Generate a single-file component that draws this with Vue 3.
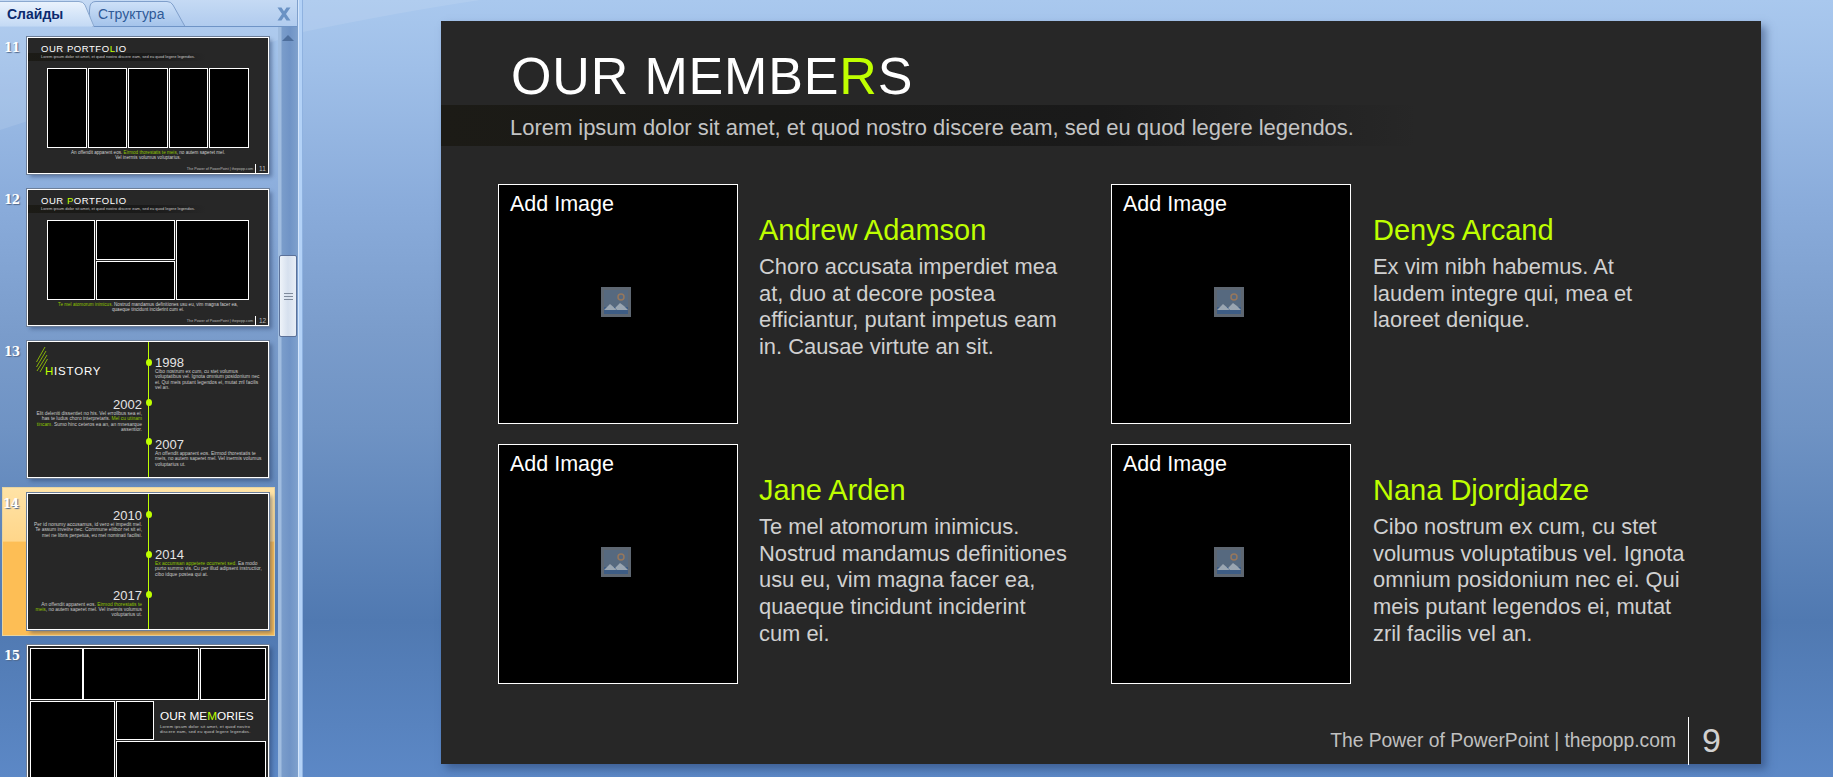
<script setup>
const members = [
  { name: 'Andrew Adamson', lines: ['Choro accusata imperdiet mea', 'at, duo at decore postea', 'efficiantur, putant impetus eam', 'in. Causae virtute an sit.'] },
  { name: 'Denys Arcand', lines: ['Ex vim nibh habemus. At', 'laudem integre qui, mea et', 'laoreet denique.'] },
  { name: 'Jane Arden', lines: ['Te mel atomorum inimicus.', 'Nostrud mandamus definitiones', 'usu eu, vim magna facer ea,', 'quaeque tincidunt inciderint', 'cum ei.'] },
  { name: 'Nana Djordjadze', lines: ['Cibo nostrum ex cum, cu stet', 'volumus voluptatibus vel. Ignota', 'omnium posidonium nec ei. Qui', 'meis putant legendos ei, mutat', 'zril facilis vel an.'] }
]
</script>

<template>
  <div class="app">
    <svg class="swoosh" width="500" height="140" viewBox="0 0 500 140"><path d="M0 130L303 32Q400 12 480 0H0z" fill="#fff" fill-opacity=".1"/></svg>
    <aside class="panel">
      <div class="tabs">
        <svg class="tab-shapes" width="297" height="27" viewBox="0 0 297 27">
          <defs>
            <linearGradient id="tabA" x1="0" y1="0" x2="0" y2="1"><stop offset="0" stop-color="#eaf3fd"/><stop offset="1" stop-color="#c3d9f4"/></linearGradient>
            <linearGradient id="tabB" x1="0" y1="0" x2="0" y2="1"><stop offset="0" stop-color="#cee1f8"/><stop offset="1" stop-color="#a4c3ea"/></linearGradient>
          </defs>
          <path d="M92.500 26.500Q88 16 90 6Q91 1.500 96 1.500H167Q171 1.500 173 5L185 26.500z" fill="url(#tabB)" stroke="#7f9fcb"/>
          <path d="M-1 26.500V1.500H79Q83 1.500 85 5L94 26.500" fill="url(#tabA)" stroke="#8ba9d0"/>
          <path d="M94 26.500H297" stroke="#6f94c6" fill="none"/>
        </svg>
        <div class="tab active">Слайды</div>
        <div class="tab">Структура</div>
        <svg class="close" width="14" height="14" viewBox="0 0 14 14"><path d="M.5 .5h4l2.500 3.800L9.500 .5h4L9 7l4.500 6.500h-4L7 9.700 4.500 13.500h-4L5 7z" fill="#6a92c4"/></svg>
      </div>
      <div class="panel-body">
        <div class="list">
          <!-- 11 -->
          <div class="row">
            <span class="num">11</span>
            <div class="thumb">
              <div class="t-title">OUR PORTFO<b>L</b>IO</div>
              <div class="t-band">Lorem ipsum dolor sit amet, et quod nostro discere eam, sed eu quod legere legendos.</div>
              <div class="t-boxes five"><i></i><i></i><i></i><i></i><i></i></div>
              <div class="t-cap">An offendit apparent eos. <b>Eirmod thorestatis te meis</b>, no autem saperet mel.<br>Vel inermis volumus voluptarius.</div>
              <div class="t-foot"><span>The Power of PowerPoint | thepopp.com</span><em>11</em></div>
            </div>
          </div>
          <!-- 12 -->
          <div class="row">
            <span class="num">12</span>
            <div class="thumb">
              <div class="t-title">OUR <b>P</b>ORTFOLIO</div>
              <div class="t-band">Lorem ipsum dolor sit amet, et quod nostro discere eam, sed eu quod legere legendos.</div>
              <div class="t-boxes mixed"><i></i><div class="stack"><i></i><i></i></div><i></i></div>
              <div class="t-cap"><b>Te mel atomorum inimicus.</b> Nostrud mandamus definitiones usu eu, vim magna facer ea,<br>quaeque tincidunt inciderint cum ei.</div>
              <div class="t-foot"><span>The Power of PowerPoint | thepopp.com</span><em>12</em></div>
            </div>
          </div>
          <!-- 13 -->
          <div class="row">
            <span class="num">13</span>
            <div class="thumb timeline">
              <div class="side left">
                <div class="hist">
                  <svg class="hatch" width="12" height="26" viewBox="0 0 12 26"><path d="M0.500 15L9 0M0.500 20L10 4M1 24L11 8M4 25L11.500 12" stroke="#9fd600" stroke-width=".8" fill="none"/></svg>
                  <span><b>H</b>ISTORY</span>
                </div>
                <div class="item i2002"><div class="yr">2002</div><p>Elit deleniti dissentiet no his. Vel errollbus sea ei,<br>has te ludus choro interpretaris. <b>Mel cu utinam</b><br><b>tincam.</b> Sumo hinc ceteros ea an, an mnesarque<br>assentior.</p></div>
              </div>
              <div class="side right">
                <div class="item i1998"><div class="yr">1998</div><p>Cibo nostrum ex cum, cu stet volumus<br>voluptatibus vel. Ignota omnium posidonium nec<br>ei. Qui meis putant legendos ei, mutat zril facilis<br>vel an.</p></div>
                <div class="item i2007"><div class="yr">2007</div><p>An offendit apparent eos. Eirmod thorestatis te<br>meis, no autem saperet mel. Vel inermis volumus<br>voluptarius ut.</p></div>
              </div>
              <i class="dot d1"></i><i class="dot d2"></i><i class="dot d3"></i>
            </div>
          </div>
          <!-- 14 -->
          <div class="row selected">
            <span class="num">14</span>
            <div class="thumb timeline">
              <div class="side left">
                <div class="item i2010"><div class="yr">2010</div><p>Per id nonumy accusamus, id vero ei impedit mel.<br>Te assum inveiire nec. Commune elitbor ret sit ei,<br>mei ne libris perpetua, eu mel nominati facilisi.</p></div>
                <div class="item i2017"><div class="yr">2017</div><p>An offendit apparent eos. <b>Eirmod thorestatis te</b><br><b>meis</b>, no autem saperet mel. Vel inermis volumus<br>voluptarius ut.</p></div>
              </div>
              <div class="side right">
                <div class="item i2014"><div class="yr">2014</div><p><b>Ex accumsan appetere ocurreret sed.</b> Ea modo<br>purto summo vis. Cu per illud adipsent instructior,<br>cibo idque postea qui at.</p></div>
              </div>
              <i class="dot d4"></i><i class="dot d5"></i><i class="dot d6"></i>
            </div>
          </div>
          <!-- 15 -->
          <div class="row">
            <span class="num">15</span>
            <div class="thumb mem">
              <i class="a1"></i><i class="a2"></i><i class="a3"></i>
              <i class="b1"></i><i class="b2"></i><i class="b3"></i>
              <div class="mem-text">
                <div class="mem-title">OUR ME<b>M</b>ORIES</div>
                <p>Lorem ipsum dolor sit amet, et quod nostro<br>discere eam, sed eu quod legere legendos.</p>
              </div>
            </div>
          </div>
        </div>
        <div class="scroll">
          <div class="arrow"></div>
          <div class="knob"><span></span></div>
        </div>
      </div>
    </aside>
    <div class="split"></div>
    <main class="stage">
      <section class="slide">
        <h1 class="title">OUR MEMBE<span>R</span>S</h1>
        <div class="band">Lorem ipsum dolor sit amet, et quod nostro discere eam, sed eu quod legere legendos.</div>
        <div class="grid">
          <article v-for="m in members" :key="m.name" class="card">
            <div class="pic">
              <span>Add Image</span>
              <svg class="ph" width="30" height="30" viewBox="0 0 30 30">
                <rect width="30" height="30" fill="#5e6772"/>
                <rect x="3" y="3" width="24" height="24" fill="#56697f"/>
                <rect x="3" y="20" width="24" height="7" fill="#3d5c84"/>
                <circle cx="20" cy="10" r="3" fill="none" stroke="#96775c" stroke-width="1.500"/>
                <path d="M3 23l6-6 3.500 3 3 3H3zM14 21l5-5 4 3 4 4H16z" fill="#9aa6b2"/>
              </svg>
            </div>
            <div class="info">
              <h2>{{ m.name }}</h2>
              <p v-for="l in m.lines" :key="l">{{ l }}</p>
            </div>
          </article>
        </div>
        <footer class="foot">
          <span>The Power of PowerPoint | thepopp.com</span>
          <em>9</em>
        </footer>
      </section>
    </main>
  </div>
</template>

<style>
html, body { margin: 0; padding: 0; overflow: hidden; }
</style>

<style scoped>
* { box-sizing: border-box; }
.app {
  width: 1833px; height: 777px; display: flex; overflow: hidden; position: relative;
  font-family: "Liberation Sans", Arial, sans-serif;
  background: linear-gradient(180deg, #a9c8ee 0%, #9fbfe8 9%, #8aacdb 26%, #7a9ccb 43%, #6f93c4 55%, #5079b1 80%, #5c88c6 100%);
}
.swoosh { position: absolute; left: 0; top: 0; }
.panel { width: 298px; flex: none; display: flex; flex-direction: column; height: 777px; position: relative; }
.tabs {
  height: 27px; flex: none; display: flex; align-items: center; position: relative;
  background: linear-gradient(180deg, #c5daf4, #b0cbee);
  border-right: 1px solid #7fa0cc;
}
.tab-shapes { position: absolute; left: 0; top: 0; }
.tab { position: relative; font-size: 14px; line-height: 26px; color: #2f5a97; padding-left: 7px; width: 90px; height: 26px; white-space: nowrap; }
.tab:not(.active) { padding-left: 8px; }
.tab.active { color: #0b2a6e; font-weight: 700; }
.close { position: absolute; right: 6px; top: 7px; }
.panel-body { flex: 1; display: flex; min-height: 0; }
.list { flex: 1; min-width: 0; padding: 10px 0 0 2px; display: flex; flex-direction: column; gap: 15px; overflow: hidden; }
.row { display: flex; flex: none; width: 273px; }
.num {
  width: 25px; flex: none; font: 700 12px "DejaVu Serif", serif; color: #fff; padding: 4px 0 0 2px; letter-spacing: -.5px;
  text-shadow: 1px 1px 1px #50698d;
}
.row.selected {
  margin: -6px 0 -6px; padding: 5px 0; height: 149px;
  background: linear-gradient(180deg, #ffe3a6 0%, #ffd68a 36%, #fdbe55 37%, #fdbe55 100%);
  border: 1px solid #e8d49f;
}
.row.selected .num { width: 24px; padding-left: 0; }
.thumb {
  width: 242px; height: 137px; flex: none; position: relative; overflow: hidden;
  background: #272727; border: 1px solid #fff; outline: 1px solid #6d7f99;
  box-shadow: 3px 3px 4px rgba(30, 50, 90, .45);
  color: #cfcfcf; display: flex; flex-direction: column;
}
.thumb b { color: #8fc400; font-weight: 400; }
.t-title { font-size: 9.500px; letter-spacing: .55px; color: #fff; padding: 5px 0 0 13px; height: 15px; line-height: 11px; white-space: nowrap; }
.t-title b { color: #bfff00; }
.t-band {
  height: 8px; line-height: 8px; font-size: 4px; padding-left: 13px; color: #c8c8c8; white-space: nowrap;
  background: linear-gradient(90deg, #1c1b16 0%, #191917 25%, #1a1a1a 50%, rgba(27,27,27,0) 74%);
}
.t-boxes { height: 80px; margin: 7px 19px 0 19px; display: flex; gap: 1px; flex: none; }
.t-boxes i { background: #000; border: 1px solid #fff; display: block; }
.five i { flex: 1; }
.mixed > i:first-child { width: 48px; }
.mixed > i:last-child { width: 73px; }
.stack { width: 80px; display: flex; flex-direction: column; gap: 1px; }
.stack i { flex: 1; }
.t-cap { font-size: 4.600px; line-height: 5.200px; text-align: center; margin: 2px 0 0; height: 11px; color: #d0d0d0; white-space: nowrap; }
.t-foot { display: flex; justify-content: flex-end; align-items: center; font-size: 3.700px; color: #bbb; margin-top: auto; height: 9px; }
.t-foot em { font-style: normal; font-size: 6.500px; border-left: 1px solid #fff; margin-left: 2px; width: 13px; padding-left: 3px; height: 9px; line-height: 9px; }
.timeline { flex-direction: row; }
.timeline::before { content: ''; position: absolute; left: 120px; top: 0; bottom: 0; width: 1px; background: #bfff00; }
.side { height: 100%; width: 120px; flex: none; display: flex; flex-direction: column; }
.side.left { text-align: right; align-items: flex-end; padding-right: 6px; }
.side.right { margin-left: 7px; width: 112px; }
.item { white-space: nowrap; }
.yr { font-size: 13px; line-height: 13px; color: #e4e4e4; }
.item p { margin: 0; font-size: 4.900px; line-height: 5.300px; color: #c9c9c9; }
.hist { height: 34px; position: relative; width: 100%; flex: none; text-align: left; }
.hist span { position: absolute; left: 17px; top: 23px; font-size: 11.500px; letter-spacing: .8px; color: #fff; line-height: 12px; }
.hist b { color: #bfff00; }
.hatch { position: absolute; left: 8px; top: 5px; }
.i2002 { margin-top: 22px; }
.i1998 { margin-top: 14px; }
.i2007 { margin-top: 48px; }
.i2010 { margin-top: 15px; }
.i2017 { margin-top: 51px; }
.i2014 { margin-top: 54px; }
.dot { position: absolute; width: 6px; height: 7px; border-radius: 50%; background: #bfff00; left: 117.500px; }
.d1 { top: 17px; } .d2 { top: 57px; } .d3 { top: 96px; }
.d4 { top: 17px; } .d5 { top: 57px; } .d6 { top: 97px; }
.mem {
  display: grid; padding: 2px 1px 0 2px; gap: 1px;
  grid-template-columns: 85px 1px 38px 1px 44px 1px 66px;
  grid-template-rows: 52px 39px 60px;
  column-gap: 0; height: 137px;
}
.mem i { background: #000; border: 1px solid #fff; display: block; }
.a1 { grid-area: 1 / 1 / 2 / 2; width: 53px; }
.a2 { grid-area: 1 / 1 / 2 / 6; margin-left: 53px; }
.a3 { grid-area: 1 / 6 / 2 / 8; margin-left: 1px; }
.b1 { grid-area: 2 / 1 / 4 / 2; }
.b2 { grid-area: 2 / 3 / 3 / 4; }
.b3 { grid-area: 3 / 3 / 4 / 8; }
.mem-text { grid-area: 2 / 5 / 3 / 8; padding: 9px 0 0 5px; white-space: nowrap; }
.mem-title { font-size: 11.800px; line-height: 13px; color: #fff; }
.mem-title b { color: #bfff00; }
.mem-text p { margin: 1px 0 0; font-size: 4.300px; line-height: 5px; letter-spacing: .2px; color: #c9c9c9; }
.scroll {
  width: 20px; flex: none; background: linear-gradient(90deg, #a0bde0 0, #a0bde0 3px, #7a9dcb 4px, #7094c6 60%, #7fa1cd);
  position: relative; height: 750px;
}
.arrow { margin: 8px 0 0 4px; width: 0; height: 0; border: 6px solid transparent; border-top: 0; border-bottom: 6px solid #4d6e9c; }
.knob {
  margin: 214px 0 0 1px; width: 18px; height: 82px; border: 1px solid #5b7199; border-radius: 2px;
  background: linear-gradient(90deg, #eef3f9, #d6e0ee 50%, #e8eef6);
  display: flex; align-items: center; justify-content: center;
}
.knob span { width: 9px; height: 7px; border-top: 1px solid #7f8b9c; border-bottom: 1px solid #7f8b9c; position: relative; }
.knob span::after { content: ''; position: absolute; left: 0; right: 0; top: 2px; height: 1px; background: #7f8b9c; }
.split { width: 5px; flex: none; background: #b3d2f7; border-left: 1px solid #d5e6fb; border-right: 1px solid #8fb2e0; position: relative; }
.stage { flex: 1; padding: 21px 0 0 138px; min-width: 0; position: relative; }
.slide {
  width: 1320px; height: 743px; background: #272727; box-shadow: 5px 5px 8px rgba(35, 60, 105, .5);
  display: flex; flex-direction: column; position: relative;
}
.title {
  margin: 0; padding: 27px 0 0 70px; height: 84px; font-weight: 400; font-size: 52px; line-height: 57px;
  letter-spacing: .85px; color: #fff; white-space: nowrap;
}
.title span { color: #bfff00; }
.band {
  height: 41px; line-height: 45px; padding-left: 69px; font-size: 21.950px; color: #c4c4c4; white-space: nowrap;
  background: linear-gradient(90deg, #1c1b16 0%, #191917 25%, #1a1a1a 50%, rgba(27,27,27,0) 74%);
}
.grid {
  display: grid; grid-template-columns: 613px 613px; grid-auto-rows: 240px; row-gap: 20px; column-gap: 0;
  padding: 38px 0 0 57px;
}
.card { display: flex; }
.pic {
  width: 240px; height: 240px; flex: none; background: #000; border: 1px solid #fff; position: relative;
  display: flex; align-items: center; justify-content: center;
}
.pic span { position: absolute; left: 11px; top: 7px; font-size: 21.500px; line-height: 24px; color: #fff; }
.ph { display: block; margin: 0 4px 4px 0; }
.info { margin-left: 21px; padding-top: 29px; min-width: 0; }
.card:nth-child(even) .info { margin-left: 22px; }
.info h2 { margin: 0 0 7px; font-weight: 400; font-size: 29px; line-height: 34px; color: #bfff00; white-space: nowrap; }
.info p { margin: 0; font-size: 21.900px; line-height: 26.700px; color: #d0d0d0; white-space: nowrap; }
.foot {
  margin-top: auto; height: 47px; display: flex; justify-content: flex-end; font-size: 19.300px; color: #c0c0c0;
  align-items: flex-start;
}
.foot span { padding-top: 13px; line-height: 22px; }
.foot em {
  font-style: normal; font-size: 34px; line-height: 36px; height: 48px; width: 73px; margin-left: 12px;
  border-left: 1px solid #fff; padding: 5px 0 0 13px; color: #d0d0d0;
}
</style>
